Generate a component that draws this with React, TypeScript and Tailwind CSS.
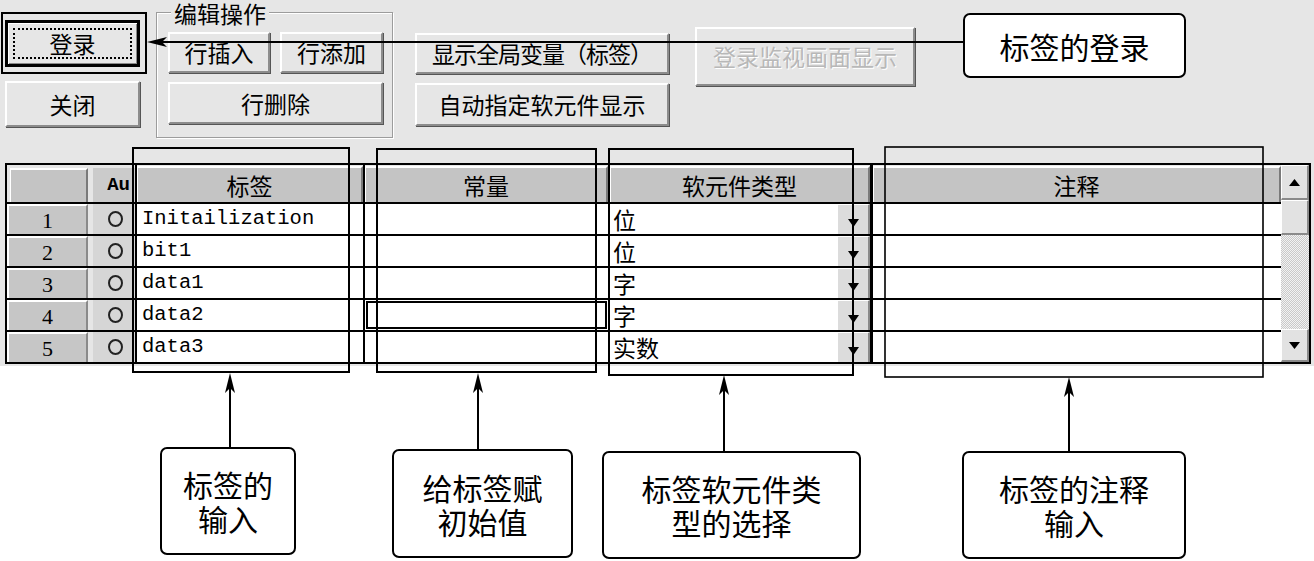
import clsx from "clsx";

const rows = [
  { n: 1, label: "Initailization", type: "位" },
  { n: 2, label: "bit1", type: "位" },
  { n: 3, label: "data1", type: "字" },
  { n: 4, label: "data2", type: "字", focus: true },
  { n: 5, label: "data3", type: "实数" },
];

function Btn({
  children,
  className,
  disabled,
}: {
  children: React.ReactNode;
  className?: string;
  disabled?: boolean;
}) {
  return (
    <div
      className={clsx(
        "flex items-center justify-center bg-[#e6e6e6] border-2 border-t-white border-l-white border-r-[#8c8c8c] border-b-[#8c8c8c] shadow-[1px_1px_0_#555] text-[23px] leading-none whitespace-nowrap",
        disabled ? "text-[#b8b8b8] [text-shadow:1px_1px_0_#fff] shadow-[1px_1px_0_#9a9a9a]" : "text-black",
        className
      )}
    >
      {children}
    </div>
  );
}

function Callout({ text, className }: { text: string; className?: string }) {
  return (
    <div
      className={clsx(
        "flex items-center justify-center bg-white border-2 border-black rounded-[7px] text-[30px] leading-[34px] text-black text-center whitespace-pre-line",
        className
      )}
    >
      {text}
    </div>
  );
}

function HeadCell({ children, className }: { children?: React.ReactNode; className?: string }) {
  return (
    <div className={clsx("h-full flex items-center justify-center bg-[#c4c4c4] border-t-2 border-l border-t-white border-l-white border-r-2 border-r-[#7a7a7a] text-[23px] leading-none", className)}>
      {children}
    </div>
  );
}

export default function App() {
  return (
    <div className="relative w-[1314px] h-[561px] overflow-hidden bg-white font-['Noto_Sans_CJK_SC',sans-serif] text-black">
      {/* window area */}
      <div className="h-[366px] bg-[#e6e6e6]">
        <div className="flex items-start h-[138px]">
          <div className="flex flex-col ml-[5px] mt-[20px]">
            <div className="w-[135px] h-[47px] border-[3px] border-black bg-[#e6e6e6] p-[5px] shadow-[inset_1px_1px_0_#fff,inset_-1px_-1px_0_#888]">
              <div className="h-full border-2 border-dotted border-black flex items-center justify-center text-[23px] leading-none">
                登录
              </div>
            </div>
            <Btn className="w-[135px] h-[46px] mt-[14px]">关闭</Btn>
          </div>

          <div className="relative ml-[16px] mt-[12px] w-[237px] h-[126px] border border-[#9c9c9c] shadow-[inset_1px_1px_0_#fff,1px_1px_0_#fff] pl-[11px] pt-[19px]">
            <span className="absolute left-[14px] -top-[12px] px-[3px] bg-[#e6e6e6] text-[23px] leading-[24px]">
              编辑操作
            </span>
            <div className="grid grid-cols-[102px_103px] gap-x-[10px] gap-y-[9px]">
              <Btn className="h-[41px]">行插入</Btn>
              <Btn className="h-[41px]">行添加</Btn>
              <Btn className="col-span-2 h-[42px]">行删除</Btn>
            </div>
          </div>

          <div className="flex flex-col gap-[9px] ml-[22px] mt-[33px]">
            <Btn className="w-[254px] h-[41px] tracking-[-1px]">显示全局变量（标签）</Btn>
            <Btn className="w-[254px] h-[43px]">自动指定软元件显示</Btn>
          </div>

          <Btn disabled className="ml-[26px] mt-[27px] w-[220px] h-[59px]">
            登录监视画面显示
          </Btn>

          <Callout text="标签的登录" className="ml-[48px] mt-[13px] w-[223px] h-[65px]" />
        </div>

        {/* table */}
        <div className="ml-[5px] mt-[25px] w-[1306px] flex border-2 border-black bg-[#e6e6e6]">
          <div className="w-[1274px] flex flex-col">
            <div className="flex h-[37px]">
              <div className="w-[83px] pl-[3px] pr-[2px] pt-[3px]">
                <HeadCell />
              </div>
              <div className="w-[45px] pl-[3px] pt-[3px]">
                <div className="h-full bg-[#cbcbcb] flex items-center justify-end pr-[5px] font-['Liberation_Mono',monospace] font-bold text-[19px] leading-none">
                  Au
                </div>
              </div>
              <div className="w-[228px] border-l-2 border-black pt-[1px]">
                <HeadCell>标签</HeadCell>
              </div>
              <div className="w-[245px] border-l-2 border-black pt-[1px]">
                <HeadCell>常量</HeadCell>
              </div>
              <div className="w-[262px] border-l-2 border-black pt-[1px]">
                <HeadCell>软元件类型</HeadCell>
              </div>
              <div className="w-[411px] border-l-[3px] border-black pt-[1px]">
                <HeadCell>注释</HeadCell>
              </div>
            </div>

            {rows.map((r) => (
              <div key={r.n} className="flex h-[32px] border-t-2 border-black">
                <div className="w-[83px] pr-[2px]">
                  <div className="h-full flex items-center justify-center bg-[#c6c6c6] border-t-2 border-l-2 border-white border-r-2 border-r-[#8a8a8a] font-['Liberation_Serif',serif] text-[22px] leading-none pt-[2px]">
                    {r.n}
                  </div>
                </div>
                <div className="w-[45px] pl-[3px]">
                  <div className="h-full bg-[#d6d6d6] flex items-center justify-center pl-[2px]">
                    <span className="block w-[15px] h-[16px] rounded-[50%] border-2 border-[#222]" />
                  </div>
                </div>
                <div className="w-[228px] border-l-2 border-black bg-white flex items-center pl-[5px] font-['Liberation_Mono',monospace] text-[20.5px] leading-none">
                  {r.label}
                </div>
                <div className="w-[245px] border-l-2 border-black bg-white p-[1px]">
                  {r.focus && <div className="h-full border-2 border-black" />}
                </div>
                <div className="w-[262px] border-l-2 border-black bg-white flex items-stretch">
                  <span className="flex-1 flex items-center pl-[3px] text-[23px] leading-none">{r.type}</span>
                  <div className="w-[33px] bg-[#dcdcdc] border-t border-l border-white border-r-2 border-r-[#8a8a8a] flex items-end justify-center pb-[7px]">
                    <svg width="11" height="8" viewBox="0 0 11 8">
                      <polygon points="0,0 11,0 5.5,8" fill="#000" />
                    </svg>
                  </div>
                </div>
                <div className="w-[411px] border-l-[3px] border-black bg-white" />
              </div>
            ))}
          </div>

          <div className="w-[28px] flex flex-col bg-[#e6e6e6]">
            <div className="h-[35px] bg-[#e2e2e2] border-t border-l border-white border-r-2 border-b-2 border-r-[#8a8a8a] border-b-[#8a8a8a] flex items-center justify-center">
              <svg width="11" height="7" viewBox="0 0 11 7">
                <polygon points="0,7 11,7 5.5,0" fill="#000" />
              </svg>
            </div>
            <div className="h-[35px] bg-[#e2e2e2] border-t border-l border-white border-r-2 border-b-2 border-r-[#8a8a8a] border-b-[#8a8a8a]" />
            <div className="flex-1 bg-[image:repeating-conic-gradient(#c9c9c9_0_25%,#f2f2f2_0_50%)] bg-[length:2px_2px]" />
            <div className="h-[33px] bg-[#e2e2e2] border-t border-l border-white border-r-2 border-b-2 border-r-[#8a8a8a] border-b-[#8a8a8a] flex items-center justify-center">
              <svg width="11" height="7" viewBox="0 0 11 7">
                <polygon points="0,0 11,0 5.5,7" fill="#000" />
              </svg>
            </div>
          </div>
        </div>
      </div>

      {/* callouts below the window */}
      <div className="flex items-start h-[195px]">
        <Callout text={"标签的\n输入"} className="ml-[160px] mt-[81px] w-[136px] h-[108px]" />
        <Callout text={"给标签赋\n初始值"} className="ml-[96px] mt-[83px] w-[181px] h-[109px]" />
        <Callout text={"标签软元件类\n型的选择"} className="ml-[29px] mt-[85px] w-[259px] h-[108px]" />
        <Callout text={"标签的注释\n输入"} className="ml-[101px] mt-[85px] w-[224px] h-[108px]" />
      </div>

      {/* annotation marks drawn over the screenshot */}
      <svg className="absolute inset-0 pointer-events-none" width="1314" height="561" viewBox="0 0 1314 561">
        <g fill="none" stroke="#000" strokeWidth="2">
          <rect x="2" y="13" width="144" height="60" />
          <rect x="133" y="148" width="216" height="224" />
          <rect x="377" y="149" width="219" height="223" />
          <rect x="609" y="149" width="244" height="226" />
          <rect x="885" y="147" width="378" height="230" strokeWidth="1.6" />
          <line x1="160" y1="42" x2="963" y2="42" />
          <line x1="230" y1="388" x2="230" y2="447" />
          <line x1="478" y1="388" x2="478" y2="449" />
          <line x1="724" y1="390" x2="724" y2="451" />
          <line x1="1069" y1="392" x2="1069" y2="451" />
        </g>
        <g fill="#000">
          <polygon points="147,42 167,37 162,42 167,47" />
          <polygon points="230,373 225,393 230,388 235,393" />
          <polygon points="478,373 473,393 478,388 483,393" />
          <polygon points="724,375 719,395 724,390 729,395" />
          <polygon points="1069,377 1064,397 1069,392 1074,397" />
        </g>
      </svg>
    </div>
  );
}
